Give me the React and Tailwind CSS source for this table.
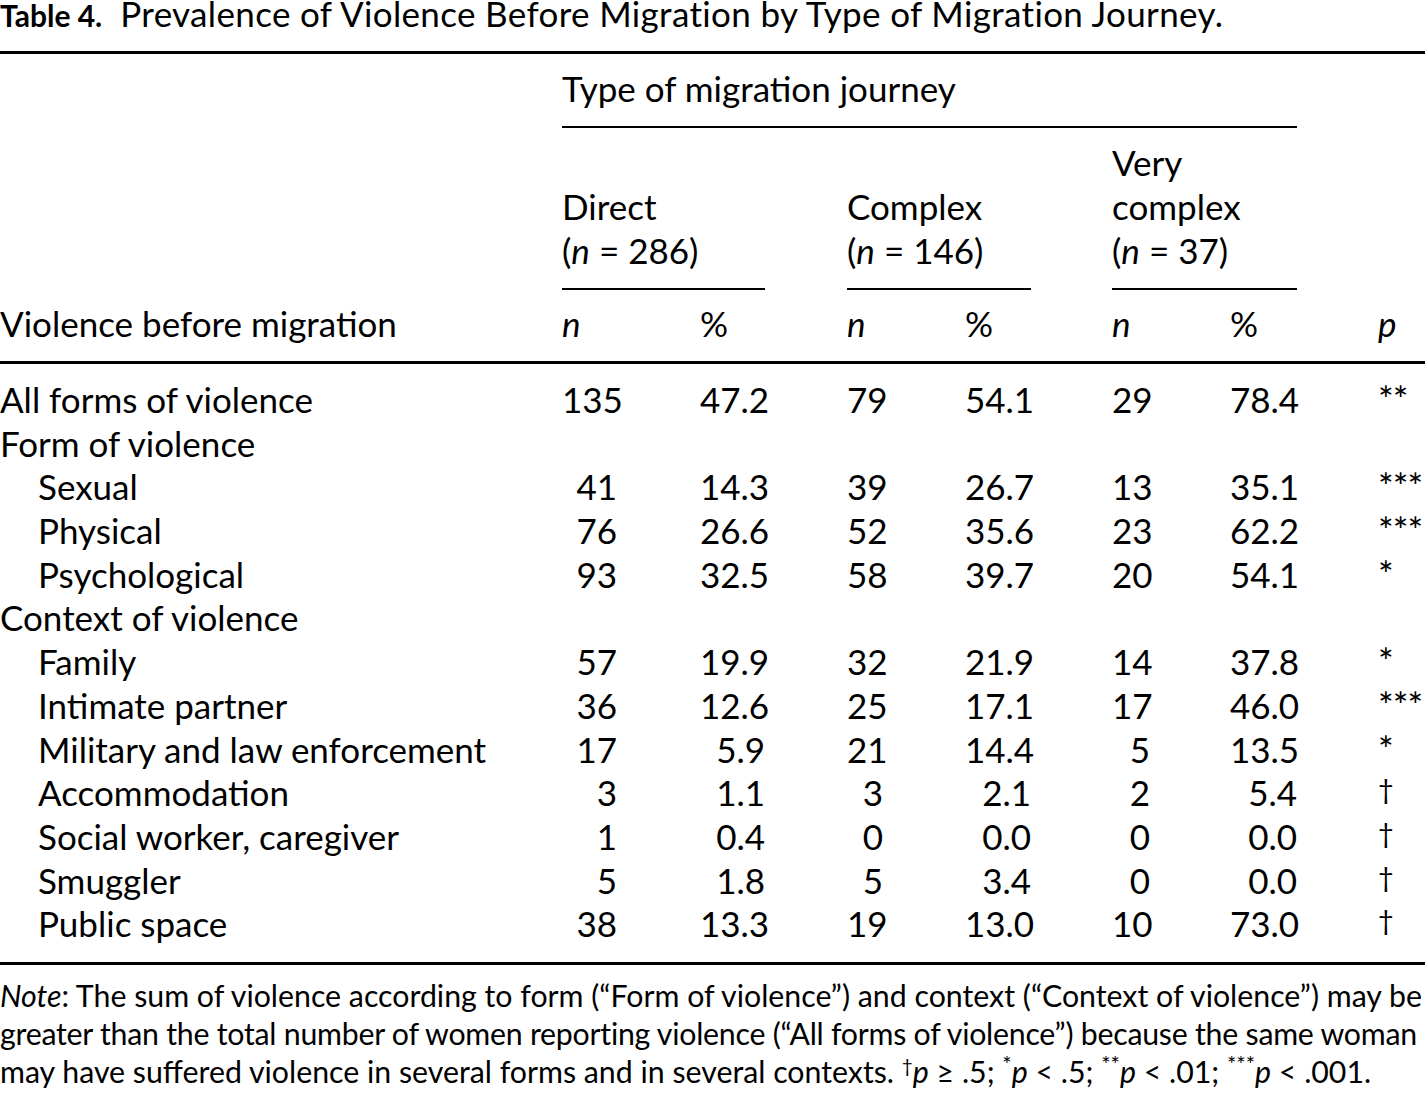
import React from "react";

const COLS =
  "grid grid-cols-[562px_138px_65px_82px_118px_66px_81px_118px_67px_81px_47px]";

const rows = [
  { label: "All forms of violence", v: ["135", "47.2", "79", "54.1", "29", "78.4", "**"] },
  { label: "Form of violence" },
  { label: "Sexual", sub: true, v: ["41", "14.3", "39", "26.7", "13", "35.1", "***"] },
  { label: "Physical", sub: true, v: ["76", "26.6", "52", "35.6", "23", "62.2", "***"] },
  { label: "Psychological", sub: true, v: ["93", "32.5", "58", "39.7", "20", "54.1", "*"] },
  { label: "Context of violence" },
  { label: "Family", sub: true, v: ["57", "19.9", "32", "21.9", "14", "37.8", "*"] },
  { label: "Intimate partner", sub: true, v: ["36", "12.6", "25", "17.1", "17", "46.0", "***"] },
  { label: "Military and law enforcement", sub: true, v: ["17", "5.9", "21", "14.4", "5", "13.5", "*"] },
  { label: "Accommodation", sub: true, v: ["3", "1.1", "3", "2.1", "2", "5.4", "†"] },
  { label: "Social worker, caregiver", sub: true, v: ["1", "0.4", "0", "0.0", "0", "0.0", "†"] },
  { label: "Smuggler", sub: true, v: ["5", "1.8", "5", "3.4", "0", "0.0", "†"] },
  { label: "Public space", sub: true, v: ["38", "13.3", "19", "13.0", "10", "73.0", "†"] },
];

function N() {
  return <i>n</i>;
}

// significance marks sit high, like the journal's typeface
function Sig({ mark }) {
  if (mark === "†") {
    return <span className="text-[27px] leading-none align-[7px]">†</span>;
  }
  return <span className="text-[37px] leading-none tracking-[-1px]">{mark}</span>;
}

function DataRow({ row }) {
  const v = row.v;
  return (
    <div className={`${COLS} h-[43.7px] leading-[43.7px]`}>
      <div className={row.sub ? "pl-[38px]" : ""}>{row.label}</div>
      {v && (
        <>
          <div className="text-right pr-[83px]">{v[0]}</div>
          <div className="text-right">{v[1]}</div>
          <div />
          <div className="text-right pr-[82px]">{v[2]}</div>
          <div className="text-right">{v[3]}</div>
          <div />
          <div className="text-right pr-[80px]">{v[4]}</div>
          <div className="text-right">{v[5]}</div>
          <div />
          <div className="whitespace-nowrap">
            <Sig mark={v[6]} />
          </div>
        </>
      )}
    </div>
  );
}

export default function App() {
  return (
    <div className="w-[1425px] min-h-[1094px] bg-white text-black font-['Lato',sans-serif] overflow-hidden">
      {/* Caption */}
      <p className="pt-[1px] text-[35px] leading-[24px] whitespace-nowrap">
        <b className="text-[30px]">Table 4.</b>
        <span className="ml-[18px] tracking-[0.35px]">
          Prevalence of Violence Before Migration by Type of Migration Journey.
        </span>
      </p>

      <div className="mt-[24px] h-[3px] bg-black" />

      <div className="text-[35px] leading-[44px]">
        {/* Spanner header */}
        <div className={`${COLS} pt-[12px]`}>
          <div className="col-start-2 col-span-8 border-b-2 border-black pb-[16px]">
            Type of migration journey
          </div>
        </div>

        {/* Group headers */}
        <div className={`${COLS} items-end pt-[12px]`}>
          <div className="col-start-2 col-span-2 border-b-2 border-black pb-[16px]">
            Direct
            <br />(<N /> = 286)
          </div>
          <div />
          <div className="col-span-2 border-b-2 border-black pb-[16px]">
            Complex
            <br />(<N /> = 146)
          </div>
          <div />
          <div className="col-span-2 border-b-2 border-black pb-[16px]">
            Very
            <br />
            complex
            <br />(<N /> = 37)
          </div>
        </div>

        {/* Column headers */}
        <div className={`${COLS} pt-[11px] pb-[16px]`}>
          <div>Violence before migration</div>
          <div>
            <N />
          </div>
          <div>%</div>
          <div />
          <div>
            <N />
          </div>
          <div>%</div>
          <div />
          <div>
            <N />
          </div>
          <div>%</div>
          <div />
          <div>
            <i>p</i>
          </div>
        </div>

        <div className="h-[3px] bg-black" />

        <div className="pt-[14px] pb-[16px]">
          {rows.map((r) => (
            <DataRow key={r.label} row={r} />
          ))}
        </div>

        <div className="h-[3px] bg-black" />
      </div>

      {/* Note */}
      <div className="pt-[11px] text-[30.3px] leading-[38px] whitespace-nowrap">
        <div>
          <i>Note</i>: The sum of violence according to form (“Form of violence”) and context (“Context of violence”) may be
        </div>
        <div className="tracking-[-0.25px]">
          greater than the total number of women reporting violence (“All forms of violence”) because the same woman
        </div>
        <div>
          may have suffered violence in several forms and in several contexts.{" "}
          <sup className="text-[19px]">†</sup>
          <i>p</i> ≥ .5; <sup className="text-[22px]">*</sup>
          <i>p</i> &lt; .5; <sup className="text-[22px]">**</sup>
          <i>p</i> &lt; .01; <sup className="text-[22px]">***</sup>
          <i>p</i> &lt; .001.
        </div>
      </div>
    </div>
  );
}
